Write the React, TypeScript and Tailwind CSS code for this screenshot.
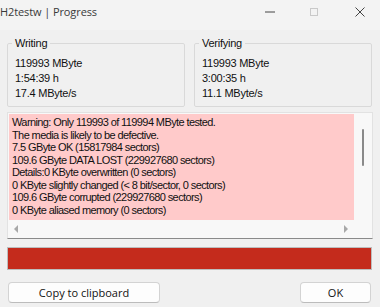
const WRITE = ["119993 MByte", "1:54:39 h", "17.4 MByte/s"];
const VERIFY = ["119993 MByte", "3:00:35 h", "11.1 MByte/s"];

const LOG = [
  "Warning: Only 119993 of 119994 MByte tested.",
  "The media is likely to be defective.",
  "7.5 GByte OK (15817984 sectors)",
  "109.6 GByte DATA LOST (229927680 sectors)",
  "Details:0 KByte overwritten (0 sectors)",
  "0 KByte slightly changed (< 8 bit/sector, 0 sectors)",
  "109.6 GByte corrupted (229927680 sectors)",
  "0 KByte aliased memory (0 sectors)",
];

function GroupBox({ title, lines }: { title: string; lines: string[] }) {
  return (
    <fieldset className="border border-[#d9d9d9] rounded-[2px] h-[71px] pl-[7px] pt-[6px] tracking-[-0.25px]">
      <legend className="-ml-[3px] px-[3px] leading-[14px]">{title}</legend>
      {lines.map((l) => (
        <div key={l} className="leading-[15px]">
          {l}
        </div>
      ))}
    </fieldset>
  );
}

export default function App() {
  return (
    <div
      className="w-[380px] h-[307px] bg-[#f0f0f0] text-[#111] text-[11px] overflow-hidden"
      style={{ fontFamily: "Tahoma, 'Liberation Sans', Arial, sans-serif" }}
    >
      {/* title bar */}
      <div className="h-[30px] flex items-start bg-[#f3f3f3]">
        <span className="text-[11px] tracking-[-0.1px] text-[#3a3a3a] mt-[4px] font-['Open_Sans',sans-serif]">
          H2testw | Progress
        </span>
        <div className="ml-auto flex items-center h-[24px] text-[#555]">
          <svg width="10" height="10" viewBox="0 0 10 10" className="mr-[35px]">
            <line x1="0" y1="5" x2="10" y2="5" stroke="#444" strokeWidth="1" />
          </svg>
          <svg width="8" height="8" viewBox="0 0 8 8" className="mr-[37px]">
            <rect x="0.5" y="0.5" width="7" height="7" fill="none" stroke="#c9c9c9" strokeWidth="1" />
          </svg>
          <svg width="10" height="10" viewBox="0 0 10 10" className="mr-[15px]">
            <path d="M0.5 0.5 L9.5 9.5 M9.5 0.5 L0.5 9.5" stroke="#444" strokeWidth="1" />
          </svg>
        </div>
      </div>

      <div className="px-[7px] pt-[6px]">
        {/* group boxes */}
        <div className="grid grid-cols-2 gap-[9px] pr-[1px]">
          <GroupBox title="Writing" lines={WRITE} />
          <GroupBox title="Verifying" lines={VERIFY} />
        </div>

        {/* log box */}
        <div className="mt-[5px] h-[127px] border border-[#e2e2e2] border-b-[#8a8a8a] bg-[#f8f8f8] flex flex-col">
          <div className="flex flex-1 min-h-0">
            <div className="flex-1 bg-[#ffcaca] ml-[1px] mt-[1px] pl-[3px] pt-[2px] overflow-hidden tracking-[-0.6px]">
              {LOG.map((l) => (
                <div key={l} className="leading-[12.55px] whitespace-nowrap">
                  {l}
                </div>
              ))}
            </div>
            <div className="w-[18px] flex justify-center pt-[16px]">
              <div className="w-[2px] h-[37px] rounded-full bg-[#8a8a8a]" />
            </div>
          </div>
          <div className="h-[18px] flex items-center justify-between pl-[6px] pr-[24px]">
            <span className="w-0 h-0 border-y-[4px] border-y-transparent border-r-[4px] border-r-[#a8a8a8]" />
            <span className="w-0 h-0 border-y-[4px] border-y-transparent border-l-[4px] border-l-[#a8a8a8]" />
          </div>
        </div>

        {/* progress */}
        <div className="mt-[8px] h-[23px] bg-[#c42b1c] border border-[#bdbdbd] mr-[1px]" />

        {/* buttons */}
        <div className="mt-[12px] flex justify-between pl-[1px] pr-[2px] font-['Open_Sans',sans-serif] text-[11px]">
          <button className="w-[152px] h-[21px] bg-[#fdfdfd] border border-[#d3d3d3] border-b-[#bcbcbc] rounded-[4px] leading-none">
            Copy to clipboard
          </button>
          <button className="w-[71px] h-[21px] bg-[#fdfdfd] border border-[#d3d3d3] border-b-[#bcbcbc] rounded-[4px] leading-none">
            OK
          </button>
        </div>
      </div>
    </div>
  );
}
